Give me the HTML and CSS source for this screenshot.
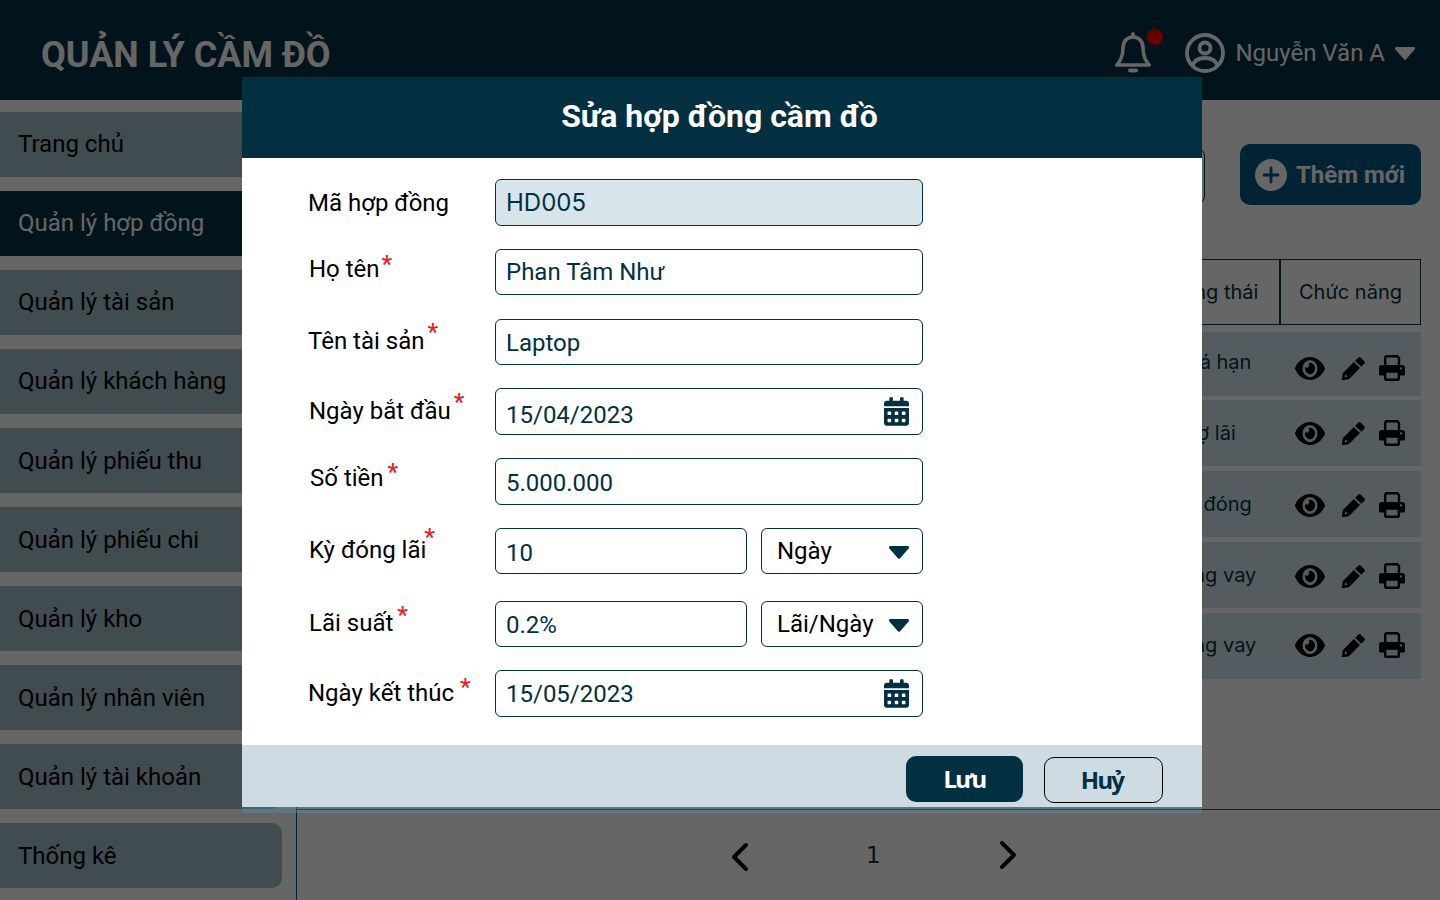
FILE: index.html
```html
<!DOCTYPE html>
<html lang="vi">
<head>
    <meta charset="UTF-8">
    <meta name="viewport" content="width=device-width, initial-scale=1.0">
    <title>Quản lý cầm đồ</title>
    <link rel="stylesheet" href="styles.css">
</head>
<body>
    <svg class="icon-defs" width="0" height="0">
        <symbol id="i-eye" viewBox="0 64 576 384" preserveAspectRatio="none"><path d="M572.52 241.4C518.29 135.59 410.93 64 288 64S57.68 135.64 3.48 241.41a32.35 32.35 0 0 0 0 29.19C57.71 376.41 165.07 448 288 448s230.32-71.64 284.52-177.41a32.35 32.35 0 0 0 0-29.19zM288 400a144 144 0 1 1 144-144 143.93 143.93 0 0 1-144 144zm0-240a95.31 95.31 0 0 0-25.31 3.79 47.85 47.85 0 0 1-66.9 66.9A95.78 95.78 0 1 0 288 160z"/></symbol>
        <symbol id="i-pen" viewBox="0 0 24 24"><path d="M16.6 1.6a1.6 1.6 0 0 1 2.3 0l3.5 3.5a1.6 1.6 0 0 1 0 2.3l-3 3-5.8-5.8zM12.4 5.8l5.8 5.8L7.5 22.3.7 23.3l1-6.8zM4 17.6l-.5 2.9 2.9-.5z"/></symbol>
        <symbol id="i-print" viewBox="0 0 26 26">
            <path d="M6.200 10V3A1.800 1.800 0 0 1 8 1.200h10.200L20 3v7" fill="none" stroke="#000" stroke-width="2.400"/>
            <path fill-rule="evenodd" d="M3 10h20a3 3 0 0 1 3 3v6a1.500 1.500 0 0 1-1.500 1.500H20V16.500H6v4H1.500A1.500 1.500 0 0 1 0 19v-6a3 3 0 0 1 3-3zM22 12.300a1.100 1.100 0 1 0 0 2.200 1.100 1.100 0 0 0 0-2.200z"/>
            <path d="M6.200 16.500h13.600v7a1.300 1.300 0 0 1-1.300 1.300h-11a1.300 1.300 0 0 1-1.300-1.300z" fill="none" stroke="#000" stroke-width="2.400"/>
        </symbol>
        <symbol id="i-cal" viewBox="0 0 448 512"><path d="M0 464c0 26.500 21.500 48 48 48h352c26.500 0 48-21.500 48-48V192H0v272zm320-196c0-6.600 5.400-12 12-12h40c6.600 0 12 5.400 12 12v40c0 6.600-5.400 12-12 12h-40c-6.600 0-12-5.400-12-12v-40zm0 128c0-6.600 5.400-12 12-12h40c6.600 0 12 5.400 12 12v40c0 6.600-5.400 12-12 12h-40c-6.600 0-12-5.400-12-12v-40zM192 268c0-6.600 5.400-12 12-12h40c6.600 0 12 5.400 12 12v40c0 6.600-5.400 12-12 12h-40c-6.600 0-12-5.400-12-12v-40zm0 128c0-6.600 5.400-12 12-12h40c6.600 0 12 5.400 12 12v40c0 6.600-5.400 12-12 12h-40c-6.600 0-12-5.400-12-12v-40zM64 268c0-6.600 5.400-12 12-12h40c6.600 0 12 5.400 12 12v40c0 6.600-5.400 12-12 12H76c-6.600 0-12-5.400-12-12v-40zm0 128c0-6.600 5.400-12 12-12h40c6.600 0 12 5.400 12 12v40c0 6.600-5.400 12-12 12H76c-6.600 0-12-5.400-12-12v-40zM400 64h-48V16c0-8.800-7.200-16-16-16h-32c-8.800 0-16 7.200-16 16v48H160V16c0-8.800-7.200-16-16-16h-32c-8.800 0-16 7.200-16 16v48H48C21.500 64 0 85.500 0 112v48h448v-48c0-26.500-21.500-48-48-48z"/></symbol>
        <symbol id="i-caret" viewBox="0 0 20 13"><path d="M1.500 0h17c1.300 0 2 1.500 1.100 2.500l-8.500 9.800c-.6.700-1.600.7-2.200 0L.4 2.500C-.5 1.500.2 0 1.500 0z"/></symbol>
    </svg>

    <header class="topbar">
        <div class="brand">QUẢN LÝ CẦM ĐỒ</div>
        <div class="topbar-right">
            <div class="bell">
                <svg width="36" height="42" viewBox="0 0 36 42" fill="none" stroke="currentColor" stroke-width="3.600" stroke-linejoin="round" stroke-linecap="round"><path d="M18 1.800v3M18 5c-6.500 0-10 5-10 11 0 9-3 13-6.200 17h32.400C31 29 28 25 28 16c0-6-3.500-11-10-11z"/><path d="M15 38.500h6" stroke-width="4"/></svg>
                <span class="bell-dot"></span>
            </div>
            <svg class="avatar" width="40" height="40" viewBox="0 0 40 40" fill="none" stroke="currentColor" stroke-width="3.800"><circle cx="20" cy="20" r="18"/><circle cx="20" cy="15" r="5.500"/><path d="M7.500 33c1.500-5.500 6-8 12.500-8s11 2.500 12.500 8"/></svg>
            <span class="user-name">Nguyễn Văn A</span>
            <svg class="user-caret" width="20" height="13"><use href="#i-caret"/></svg>
        </div>
    </header>

    <div class="layout">
        <nav class="sidebar">
            <a class="nav-item nudge-up">Trang chủ</a>
            <a class="nav-item nudge-up active">Quản lý hợp đồng</a>
            <a class="nav-item nudge-up">Quản lý tài sản</a>
            <a class="nav-item nudge-up">Quản lý khách hàng</a>
            <a class="nav-item">Quản lý phiếu thu</a>
            <a class="nav-item">Quản lý phiếu chi</a>
            <a class="nav-item">Quản lý kho</a>
            <a class="nav-item">Quản lý nhân viên</a>
            <a class="nav-item">Quản lý tài khoản</a>
            <a class="nav-item">Thống kê</a>
        </nav>

        <main class="content">
            <div class="toolbar">
                <div class="search-box"></div>
                <button class="add-btn">
                    <svg width="32" height="32" viewBox="0 0 32 32"><circle cx="16" cy="16" r="16" fill="#fff"/><path d="M16 9v14M9 16h14" stroke="#005a7f" stroke-width="2.800" stroke-linecap="round"/></svg>
                    Thêm mới
                </button>
            </div>

            <div class="table-area">
                <div class="table-head">
                    <div class="th th-status">Trạng thái</div>
                    <div class="th th-actions">Chức năng</div>
                </div>
                <div class="table-row row-1"><span class="cell-status">Quá hạn</span><div class="actions">
                    <svg class="ic-eye"><use href="#i-eye"/></svg><svg class="ic-pen"><use href="#i-pen"/></svg><svg class="ic-print"><use href="#i-print"/></svg></div></div>
                <div class="table-row row-2"><span class="cell-status">Nợ lãi</span><div class="actions">
                    <svg class="ic-eye"><use href="#i-eye"/></svg><svg class="ic-pen"><use href="#i-pen"/></svg><svg class="ic-print"><use href="#i-print"/></svg></div></div>
                <div class="table-row row-3"><span class="cell-status">Đã đóng</span><div class="actions">
                    <svg class="ic-eye"><use href="#i-eye"/></svg><svg class="ic-pen"><use href="#i-pen"/></svg><svg class="ic-print"><use href="#i-print"/></svg></div></div>
                <div class="table-row row-4"><span class="cell-status">Đang vay</span><div class="actions">
                    <svg class="ic-eye"><use href="#i-eye"/></svg><svg class="ic-pen"><use href="#i-pen"/></svg><svg class="ic-print"><use href="#i-print"/></svg></div></div>
                <div class="table-row row-5"><span class="cell-status">Đang vay</span><div class="actions">
                    <svg class="ic-eye"><use href="#i-eye"/></svg><svg class="ic-pen"><use href="#i-pen"/></svg><svg class="ic-print"><use href="#i-print"/></svg></div></div>
            </div>

            <div class="pager">
                <svg class="pager-prev" width="20" height="32" viewBox="0 0 20 32" fill="none" stroke="#000" stroke-width="4" stroke-linecap="round" stroke-linejoin="round"><path d="M16 4L4 16l12 12"/></svg>
                <span class="pager-num">1</span>
                <svg width="20" height="32" viewBox="0 0 20 32" fill="none" stroke="#000" stroke-width="4" stroke-linecap="round" stroke-linejoin="round"><path d="M4 4l12 12L4 28"/></svg>
            </div>
        </main>
    </div>

    <div class="overlay"></div>

    <!-- Edit popup -->
    <section class="modal">
        <h2 class="modal-title">Sửa hợp đồng cầm đồ</h2>
        <form class="modal-body">
            <div class="form-row">
                <label class="form-label lbl-left">Mã hợp đồng</label>
                <div class="field field-locked h47">HD005</div>
            </div>
            <div class="form-row gap-24">
                <label class="form-label up-6">Họ tên<span class="req req-name">*</span></label>
                <div class="field">Phan Tâm Như</div>
            </div>
            <div class="form-row">
                <label class="form-label lbl-left up-2">Tên tài sản<span class="req req-asset">*</span></label>
                <div class="field down-2">Laptop</div>
            </div>
            <div class="form-row">
                <label class="form-label up-2">Ngày bắt đầu<span class="req req-start">*</span></label>
                <div class="field field-date h47"><span class="down-7">15/04/2023</span><svg class="ic-cal"><use href="#i-cal"/></svg></div>
            </div>
            <div class="form-row">
                <label class="form-label lbl-right up-7">Số tiền<span class="req req-money">*</span></label>
                <div class="field h47 down-3">5.000.000</div>
            </div>
            <div class="form-row">
                <label class="form-label up-2">Kỳ đóng lãi<span class="req req-term">*</span></label>
                <div class="field field-half down-4">10</div>
                <div class="field field-select"><span>Ngày</span><svg class="ic-caret"><use href="#i-caret"/></svg></div>
            </div>
            <div class="form-row row-gap-lg">
                <label class="form-label up-2">Lãi suất<span class="req req-rate">*</span></label>
                <div class="field field-half down-2">0.2%</div>
                <div class="field field-select"><span>Lãi/Ngày</span><svg class="ic-caret"><use href="#i-caret"/></svg></div>
            </div>
            <div class="form-row">
                <label class="form-label lbl-left up-2">Ngày kết thúc<span class="req req-end">*</span></label>
                <div class="field field-date h47"><span>15/05/2023</span><svg class="ic-cal"><use href="#i-cal"/></svg></div>
            </div>
        </form>
        <div class="modal-footer">
            <button class="btn btn-save">Lưu</button>
            <button class="btn btn-cancel">Huỷ</button>
        </div>
    </section>
</body>
</html>
```

FILE: styles.css
```css
* {
    box-sizing: border-box;
}

body {
    margin: 0;
    width: 1440px;
    height: 900px;
    overflow: hidden;
    position: relative;
    font-family: Roboto, sans-serif;
    background-color: #fff;
    color: #000;
}

.icon-defs {
    position: absolute;
}

/* top bar */
.topbar {
    height: 100px;
    background-color: #033245;
    color: #fff;
    display: flex;
    align-items: center;
    justify-content: space-between;
    padding: 6px 25px 0 41px;
}

.brand {
    font-size: 36px;
    font-weight: 700;
    margin-top: 4px;
}

.topbar-right {
    display: flex;
    align-items: center;
}

.bell {
    position: relative;
    display: flex;
    margin-right: 34px;
    margin-top: -1px;
}

.bell-dot {
    position: absolute;
    top: -3px;
    left: 32px;
    width: 16px;
    height: 16px;
    border-radius: 50%;
    background-color: #ff0000;
}

.user-name {
    font-size: 24px;
    margin-left: 10px;
}

.user-caret {
    fill: #fff;
    margin-left: 10px;
}

/* sidebar + content */
.layout {
    display: flex;
    height: 800px;
}

.sidebar {
    width: 297px;
    flex-shrink: 0;
    border-right: 1px solid #0b5a75;
    padding-top: 12px;
    display: flex;
    flex-direction: column;
    gap: 14px;
}

.nav-item {
    display: flex;
    align-items: center;
    width: 282px;
    height: 65px;
    padding-left: 18px;
    font-size: 24px;
    border-radius: 0 10px 10px 0;
    background-color: #a1bdc8;
    color: #000;
}

.nav-item.nudge-up {
    padding-bottom: 2px;
}

.nav-item.active {
    background-color: #033245;
    color: #fff;
}

.content {
    flex: 1;
    display: flex;
    flex-direction: column;
    padding-right: 19px;
}

.toolbar {
    display: flex;
    justify-content: flex-end;
    padding-top: 44px;
    height: 159px;
}

.search-box {
    width: 400px;
    height: 56px;
    margin-top: 4px;
    border: 1px solid #033245;
    border-radius: 8px;
}

.add-btn {
    display: flex;
    align-items: center;
    gap: 9px;
    width: 181px;
    height: 61px;
    margin-left: 35px;
    padding: 0 0 0 15px;
    border: none;
    border-radius: 10px;
    background-color: #005a7f;
    color: #fff;
    font-family: Roboto, sans-serif;
    font-size: 24px;
    font-weight: 700;
}

.table-area {
    flex: 1;
}

.table-head {
    display: flex;
    justify-content: flex-end;
    height: 66px;
    margin-bottom: 7px;
}

.th {
    display: flex;
    align-items: center;
    justify-content: center;
    border: 1px solid #033245;
    font-family: Inter, sans-serif;
    font-size: 20px;
    color: #033245;
}

.th-status {
    width: 162px;
    padding-left: 24px;
}

.th-actions {
    width: 141px;
}

.table-row {
    display: flex;
    justify-content: flex-end;
    align-items: center;
    margin-left: 14px;
    background-color: #d4e6ed;
    font-family: Inter, sans-serif;
    font-size: 20px;
    color: #033245;
}

.row-1 { height: 64px; margin-bottom: 4px; }
.row-2 { height: 66px; margin-bottom: 5px; }
.row-3 { height: 66px; margin-bottom: 5px; }
.row-4 { height: 66px; margin-bottom: 5px; }
.row-5 { height: 66px; }

.row-1 .cell-status { margin-bottom: 4px; }
.row-1 .actions { margin-top: 8px; }
.row-2 .cell-status { padding-right: 6px; }
.row-3 .actions, .row-4 .actions { margin-top: 2px; }
.row-5 .cell-status, .row-5 .actions { margin-bottom: 2px; }

.cell-status {
    width: 136px;
    text-align: center;
}

.actions {
    width: 141px;
    display: flex;
    align-items: center;
    padding-left: 15px;
}

.ic-eye {
    width: 30px;
    height: 23px;
    fill: #000;
}

.ic-pen {
    width: 25px;
    height: 25px;
    margin-left: 16px;
    fill: #000;
}

.ic-print {
    width: 26px;
    height: 26px;
    margin-left: 13px;
    fill: #000;
}

.pager {
    margin-left: -1px;
    margin-right: -19px;
    height: 91px;
    border-top: 1px solid #0b5a75;
    display: flex;
    align-items: center;
    padding-left: 434px;
}

.pager-prev {
    margin-top: 3px;
}

.pager-num {
    font-family: "DejaVu Sans", sans-serif;
    font-size: 23px;
    color: #033245;
    margin: 0 117px 0 116px;
}

/* popup */
.overlay {
    position: absolute;
    inset: 0;
    background-color: rgba(0, 0, 0, 0.6);
}

.modal {
    position: absolute;
    left: 242px;
    top: 77px;
    width: 960px;
    background-color: #fff;
    box-shadow: 0 6px 0 rgba(90, 150, 175, 0.35);
}

.modal-title {
    margin: 0;
    height: 81px;
    padding: 0 5px 3px 0;
    display: flex;
    align-items: center;
    justify-content: center;
    background-color: #023040;
    color: #fff;
    font-size: 32px;
    font-weight: 700;
}

.modal-body {
    height: 587px;
    padding: 21px 0 0 67px;
}

.form-row {
    display: flex;
    align-items: center;
    margin-bottom: 23px;
}

.gap-24 {
    margin-bottom: 24px;
}

.row-gap-lg {
    margin-top: 27px;
}

.form-label {
    width: 186px;
    font-size: 24px;
    line-height: 28px;
}

.lbl-left {
    margin-left: -1px;
    width: 187px;
}

.lbl-right {
    margin-left: 1px;
    width: 185px;
}

.up-2 { margin-bottom: 2px; }
.up-6 { margin-bottom: 6px; }
.up-7 { margin-bottom: 7px; }

.req {
    color: #e0242c;
    font-weight: 500;
    line-height: 0;
}

.req-name { margin-left: 2px; vertical-align: 5px; }
.req-asset { margin-left: 3px; vertical-align: 9px; }
.req-start { margin-left: 3px; vertical-align: 9px; }
.req-money { margin-left: 4px; vertical-align: 6px; }
.req-term { margin-left: -2px; vertical-align: 13px; }
.req-rate { margin-left: 4px; vertical-align: 8px; }
.req-end { margin-left: 6px; vertical-align: 6px; }

.field {
    width: 428px;
    height: 46px;
    padding: 0 10px;
    display: flex;
    align-items: center;
    border: 1px solid #023040;
    border-radius: 6px;
    font-size: 24px;
    color: #023040;
}

.h47 {
    height: 47px;
}

.down-2 { padding-top: 2px; }
.down-3 { padding-top: 3px; }
.down-4 { padding-top: 4px; }
.down-7 { padding-top: 7px; }

.field-locked {
    background-color: #d7e4ea;
    font-family: Inter, sans-serif;
}

.field-date {
    justify-content: space-between;
    padding-right: 13px;
}

.ic-cal {
    width: 25px;
    height: 29px;
    fill: #023040;
}

.field-half {
    width: 252px;
}

.field-select {
    width: 162px;
    margin-left: 14px;
    padding: 0 13px 0 15px;
    justify-content: space-between;
    color: #000;
}

.field-select .ic-caret {
    margin-top: 2px;
}

.ic-caret {
    width: 20px;
    height: 13px;
    fill: #023040;
}

.modal-footer {
    height: 62px;
    background-color: #cddce3;
    display: flex;
    align-items: flex-start;
    justify-content: flex-end;
    padding: 11px 39px 0 0;
    gap: 21px;
}

.btn {
    font-family: "Noto Sans", sans-serif;
    font-size: 24px;
    font-weight: 700;
    letter-spacing: -1.8px;
    border-radius: 10px;
    padding: 0 0 2px;
}

.btn-save {
    width: 117px;
    height: 46px;
    border: none;
    background-color: #023040;
    color: #fff;
}

.btn-cancel {
    width: 119px;
    height: 46px;
    margin-top: 1px;
    padding-right: 3px;
    border: 1px solid #000;
    background-color: transparent;
    color: #023040;
}
```
